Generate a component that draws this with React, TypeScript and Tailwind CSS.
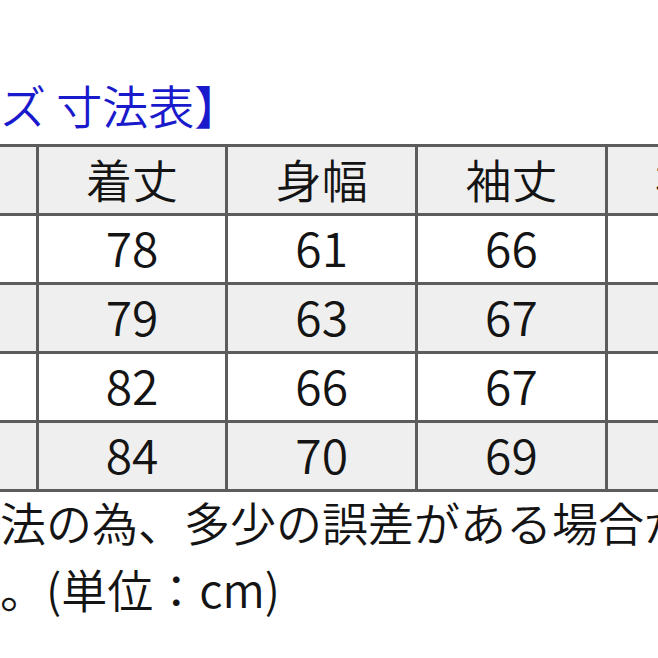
import React from "react";

const headers = ["サイズ", "着丈", "身幅", "袖丈", "裄丈"];
const rows = [
  ["", "78", "61", "66", ""],
  ["", "79", "63", "67", ""],
  ["", "82", "66", "67", ""],
  ["", "84", "70", "69", ""],
];

export default function App() {
  return (
    <div
      className="w-[658px] h-[658px] overflow-hidden bg-white text-[#141414] font-[350]"
      style={{ fontFamily: '"Noto Sans CJK JP", "Noto Sans", sans-serif' }}
    >
      <div className="mt-[81px] text-[46px] leading-[46px] text-[#1a1acd] whitespace-nowrap">
        ズ 寸法表】
      </div>
      <div className="mt-[17px] ml-[-154px] w-[951px] grid grid-cols-[repeat(5,186.7px)] gap-[3px] p-[3px] bg-[#5c5c5c]">
        {headers.map((h, i) => (
          <div
            key={`h${i}`}
            className="h-[66px] pb-[4px] bg-[#efefef] flex items-center justify-center text-[46px] leading-none whitespace-nowrap"
          >
            {i === 0 ? "" : h}
          </div>
        ))}
        {rows.map((r, ri) =>
          r.map((c, ci) => (
            <div
              key={`${ri}-${ci}`}
              className={`h-[66px] pb-[7px] flex items-center justify-center text-[48px] leading-none ${
                ri % 2 === 0 ? "bg-white" : "bg-[#efefef]"
              }`}
            >
              {c}
            </div>
          ))
        )}
      </div>
      <div className="mt-[-4px] text-[46px] leading-[67px] whitespace-nowrap">
        <div>法の為、多少の誤差がある場合が</div>
        <div>。(単位：cm)</div>
      </div>
    </div>
  );
}
